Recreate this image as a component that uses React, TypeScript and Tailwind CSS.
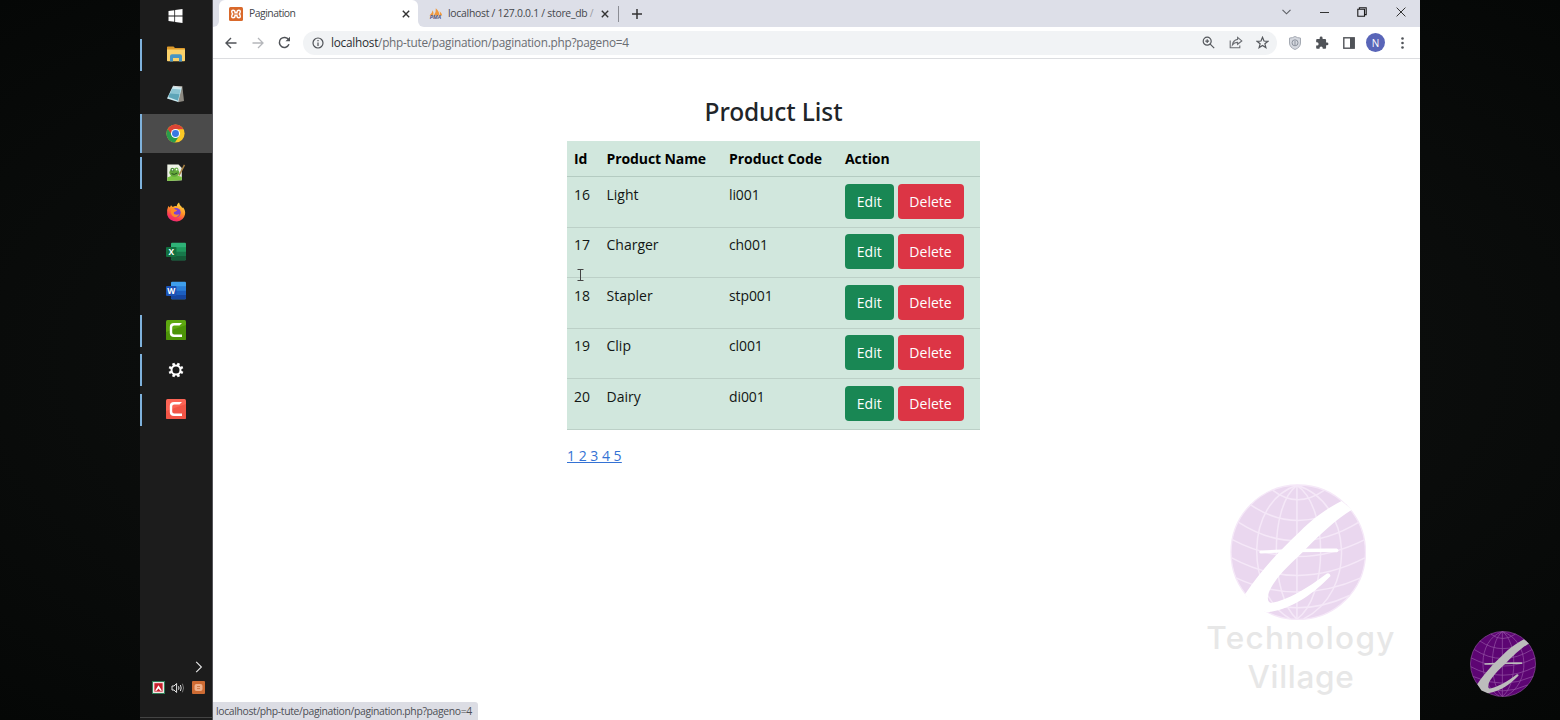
import type { ReactNode } from "react";

const products = [
  { id: 16, name: "Light", code: "li001" },
  { id: 17, name: "Charger", code: "ch001" },
  { id: 18, name: "Stapler", code: "stp001" },
  { id: 19, name: "Clip", code: "cl001" },
  { id: 20, name: "Dairy", code: "di001" },
];

function Globe({ size, fill, line, slash }: { size: number; fill: string; line: string; slash: string }) {
  return (
    <svg width={size} height={size} viewBox="119 43 410 410" className="block shrink-0">
      <circle cx="324" cy="248" r="202" fill={fill} stroke={line} strokeWidth="4" />
      <g fill="none" stroke={line} strokeWidth="4.5">
        <path d="M320 47V449" />
        <path d="M320 47C235 110 240 380 320 449M320 47C415 110 415 380 320 449" />
        <path d="M320 47C160 100 165 370 300 448M320 47C490 100 500 370 340 448" />
        <path d="M248 62Q320 118 402 62M180 105Q320 200 470 106M145 158Q320 270 505 158M126 210Q320 312 524 210M124 265Q320 370 524 265M137 325Q320 410 512 325M170 378Q320 452 478 378" />
      </g>
      <path
        d="M454 94C400 122 365 150 330 185C265 246 215 300 164 374L190 412L230 429C310 417 372 370 421 319Q419 309 410 312C350 358 290 392 245 400C228 402 228 375 248 345C275 303 310 275 340 245C395 188 435 152 485 120Z"
        fill={slash}
      />
      <path d="M211 243Q320 236 440 237Q450 243 440 248Q320 246 211 252Q203 248 211 243Z" fill={slash} />
    </svg>
  );
}

function WindowsIcon() {
  return (
    <svg width="15" height="14" viewBox="0 0 15 14" fill="#fff">
      <path d="M.5 2 6.3 1.2V6.6H.5ZM7.1 1.1 14.5.1V6.6H7.1ZM.5 7.4H6.3V12.8L.5 12ZM7.1 7.4H14.5V13.9L7.1 12.9Z" />
    </svg>
  );
}

function FolderIcon() {
  return (
    <svg width="20" height="16" viewBox="0 0 20 16">
      <path d="M1 1.2Q1 .5 1.8.5H7.5L9 2H18.3Q19 2 19 2.8V6H1Z" fill="#dd9a2b" />
      <path d="M1 3.6H19V14.5Q19 15.3 18.2 15.3H1.8Q1 15.3 1 14.5Z" fill="#fbd26b" />
      <path d="M4 15.5V10.3Q4 8.2 6 8.2H14Q16 8.2 16 10.3V15.5H13V12H7V15.5Z" fill="#4795c4" />
    </svg>
  );
}

function NotepadIcon() {
  return (
    <svg width="20" height="18" viewBox="0 0 20 18">
      <path d="M7 1.2 16.3 1 18 16 12 17.2Z" fill="#8d8a82" />
      <path d="M6.8 1.3 15.8 2.5 12.2 17 1 13.4Z" fill="#cdeaf1" />
      <path d="M6 3.7 14.7 4.6 11.9 15.4 2.5 12.1Z" fill="#8cc4d2" />
      <path d="M3.8 8.6 13.5 9.2 11.9 15.4 2.5 12.1Z" fill="#5da5b8" />
      <path d="M7 1.2 15.8 2.3" stroke="#ddd" strokeWidth="1" />
    </svg>
  );
}

function ChromeIcon() {
  return (
    <svg width="19" height="19" viewBox="0 0 48 48">
      <circle cx="24" cy="24" r="23" fill="#fbc926" />
      <path d="M24 24 4.1 12.5A23 23 0 0 0 22.5 47L34 29Z" fill="#2a9c4c" />
      <path d="M4.1 12.5A23 23 0 0 1 43.9 13H24L15 28Z" fill="#dd4435" />
      <circle cx="24" cy="24" r="11.4" fill="#fff" />
      <circle cx="24" cy="24" r="8.8" fill="#3a78e2" />
    </svg>
  );
}

function NotepadPlusIcon() {
  return (
    <svg width="20" height="19" viewBox="0 0 20 19">
      <path d="M1.3 1.5H12.5L15.8 5V17.2L1.3 18Z" fill="#eef3e6" />
      <path d="M1.3 14.5Q8 11 15.8 14V17.2L1.3 18Z" fill="#7cc443" />
      <ellipse cx="8.3" cy="9.6" rx="5" ry="4.2" fill="#64a83a" />
      <circle cx="6.3" cy="6.7" r="1.9" fill="#4b8b3c" />
      <circle cx="10.5" cy="6.5" r="1.9" fill="#6fb44c" />
      <circle cx="6.5" cy="6.8" r=".8" fill="#fff" />
      <circle cx="10.6" cy="6.6" r=".8" fill="#fff" />
      <path d="M5.5 10.6Q8 12.5 11.3 10" stroke="#294f20" strokeWidth="1" fill="none" />
      <path d="M13 12.5 18.5 1.8" stroke="#a98243" strokeWidth="1.5" />
    </svg>
  );
}

function FirefoxIcon() {
  return (
    <svg width="20" height="20" viewBox="0 0 20 20">
      <defs>
        <linearGradient id="fox" x1=".8" y1="0" x2=".3" y2="1">
          <stop offset="0" stopColor="#ffe34a" />
          <stop offset=".45" stopColor="#ff9326" />
          <stop offset=".8" stopColor="#fc3a55" />
          <stop offset="1" stopColor="#e8257e" />
        </linearGradient>
      </defs>
      <path d="M2.3 4 3.8 5.4 5 3.2 6.8 5Q8.4 3.8 10.6 4.2Q11.2 1.8 13 .5Q13.4 3 15.4 4.6L16.2 6L17 5.3Q19.8 8.5 19 12.4Q17.6 18.6 11 19.4Q3.3 19.5 1.2 13Q.3 8.2 2.3 4Z" fill="url(#fox)" />
      <circle cx="10" cy="10.6" r="4.7" fill="#7b42d6" />
      <path d="M4.8 6.2Q8 5.6 9.2 7.5L11.3 8Q10.4 9.8 8.2 9.9Q7 12 9.8 12.6Q12 13 13.5 11.8Q12 15.6 8.3 15.1Q4 13.7 4.8 6.2Z" fill="#ff8a25" />
    </svg>
  );
}

function OfficeIcon({ letter, tones }: { letter: string; tones: string[] }) {
  return (
    <svg width="20" height="19" viewBox="0 0 20 19">
      <rect x="5" y=".7" width="15" height="17.6" rx="1" fill={tones[0]} />
      <path d="M5 5.2H20V9.5H5Z" fill={tones[1]} />
      <path d="M5 9.5H20V14H5Z" fill={tones[2]} />
      <path d="M5 14H20V17.3Q20 18.3 19 18.3H6Q5 18.3 5 17.3Z" fill={tones[3]} />
      <rect x="0" y="4.9" width="10.5" height="10" rx="1" fill={tones[4]} />
      <text x="5.2" y="12.8" textAnchor="middle" fontSize="8.3" fontWeight="700" fill="#fff" fontFamily="Open Sans, sans-serif">
        {letter}
      </text>
    </svg>
  );
}

function CamtasiaIcon({ fill, shade }: { fill: string; shade: string }) {
  return (
    <svg width="20" height="20" viewBox="0 0 20 20">
      <rect width="20" height="20" rx="1.5" fill={fill} />
      <path d="M0 12 20 5V18.5Q20 20 18.5 20H1.5Q0 20 0 18.5Z" fill={shade} />
      <path d="M16 3H8Q3.800 3 3.800 7V13Q3.800 17 8 17H16V14.600H8.200Q6.200 14.600 6.200 12.600V7.400Q6.200 5.400 8.200 5.400H13.500Z" fill="#fff" />
    </svg>
  );
}

function GearIcon() {
  const teeth = [0, 45, 90, 135, 180, 225, 270, 315];
  return (
    <svg width="16" height="16" viewBox="0 0 16 16">
      {teeth.map((a) => (
        <rect key={a} x="6.7" y=".6" width="2.6" height="3.2" fill="#fff" transform={`rotate(${a + 22.5} 8 8)`} />
      ))}
      <circle cx="8" cy="8" r="4.5" fill="none" stroke="#fff" strokeWidth="2" />
    </svg>
  );
}

function TaskItem({ running, active, children }: { running?: boolean; active?: boolean; children: ReactNode }) {
  return (
    <div className={`flex h-[39.43px] items-center ${active ? "bg-[#4b4b4b]" : ""}`}>
      <div className={`w-0.5 ${active ? "h-full" : "h-8"} ${running ? "bg-[#7fb2dc]" : ""}`} />
      <div className="flex flex-1 justify-center pr-[3px] pb-px">{children}</div>
    </div>
  );
}

function Taskbar() {
  return (
    <aside className="flex w-[73px] shrink-0 flex-col border-r border-[#55555a] bg-[#1c1c1c]">
      <div className="flex h-[35px] items-center justify-center pr-px pb-[3px]">
        <WindowsIcon />
      </div>
      <TaskItem running><FolderIcon /></TaskItem>
      <TaskItem><NotepadIcon /></TaskItem>
      <TaskItem running active><ChromeIcon /></TaskItem>
      <TaskItem running><NotepadPlusIcon /></TaskItem>
      <TaskItem><FirefoxIcon /></TaskItem>
      <TaskItem><OfficeIcon letter="X" tones={["#2fb277", "#1f9a5e", "#17784a", "#145c38", "#12703f"]} /></TaskItem>
      <TaskItem><OfficeIcon letter="W" tones={["#3f9fec", "#2b7fd8", "#1c5fc0", "#1646a0", "#1b52b5"]} /></TaskItem>
      <TaskItem running><CamtasiaIcon fill="#5da810" shade="#4c9408" /></TaskItem>
      <TaskItem running><GearIcon /></TaskItem>
      <TaskItem running><CamtasiaIcon fill="#fb6455" shade="#f25546" /></TaskItem>
      <div className="mt-auto flex justify-end pr-[9px]">
        <svg width="8" height="12" viewBox="0 0 8 12" fill="none" stroke="#e8e8e8" strokeWidth="1.1">
          <path d="M1.2.8 6.4 6 1.2 11.2" />
        </svg>
      </div>
      <div className="mt-2 flex h-[14px] items-center pl-3">
        <svg width="13" height="13" viewBox="0 0 13 13">
          <rect width="13" height="13" fill="#2f7f58" />
          <rect x="1" y="1" width="11" height="11" fill="#f1e6e6" />
          <rect x="2.4" y="2.2" width="8.2" height="8.4" fill="#c9202c" />
          <path d="M3 9.8 6.5 4.3 10 9.8 8.3 9.8 6.5 7.4 4.7 9.8Z" fill="#fff" />
        </svg>
        <svg width="14" height="12" viewBox="0 0 14 12" className="ml-[6px]" fill="none" stroke="#e5e5e5" strokeWidth="1">
          <path d="M1 4H3L5.6 1.5V10.5L3 8H1Z" />
          <path d="M7.5 4.3Q8.5 6 7.5 7.7M9.4 3Q11 6 9.4 9" />
          <path d="M11.4 1.7Q13.8 6 11.4 10.3" stroke="#777" />
        </svg>
        <svg width="13" height="13" viewBox="0 0 13 13" className="ml-[7px]">
          <rect width="13" height="13" rx="1" fill="#cd6b33" />
          <rect x="2.5" y="3" width="8" height="7" rx="2" fill="#eeb08a" />
          <path d="M5 5.5H8M5 7.6H8" stroke="#cd7a48" strokeWidth="1" />
        </svg>
      </div>
      <div className="mt-[22.5px] mb-[2px] h-px w-full bg-[#444]" />
    </aside>
  );
}

function CloseX() {
  return (
    <svg width="8" height="8" viewBox="0 0 8 8" stroke="#333" strokeWidth="1.4" className="shrink-0">
      <path d="M.8.8 7.2 7.2M7.2.8.8 7.2" />
    </svg>
  );
}

function TabStrip() {
  return (
    <div className="flex h-[27px] shrink-0 items-start bg-[#dddfe8]">
      <div className="h-[27px] w-1.5 shrink-0 bg-white">
        <div className="h-full w-full rounded-br-[6px] bg-[#dddfe8]" />
      </div>
      <div className="flex h-[27px] w-[199px] items-center rounded-t-[6px] bg-white pr-2 pl-[10px]">
        <svg width="14" height="14" viewBox="0 0 14 14" className="shrink-0">
          <rect width="14" height="14" rx="1.5" fill="#d9692b" />
          <path d="M4 3.2Q6 3.2 6 5V5.8H8V5Q8 3.2 10 3.2 11.3 3.2 11.3 4.6 11.3 6 10.3 7 11.3 8 11.3 9.4 11.3 10.8 10 10.8 8 10.8 8 9V8.2H6V9Q6 10.8 4 10.8 2.7 10.8 2.7 9.4 2.7 8 3.7 7 2.7 6 2.7 4.6 2.7 3.2 4 3.2Z" fill="none" stroke="#fff" strokeWidth="1.4" />
        </svg>
        <span className="ml-1.5 flex-1 text-[10.4px] tracking-[-0.5px] text-[#45474c]">Pagination</span>
        <CloseX />
      </div>
      <div className="h-[27px] w-1.5 shrink-0 bg-white">
        <div className="h-full w-full rounded-bl-[6px] bg-[#dddfe8]" />
      </div>
      <div className="flex h-[27px] w-[195px] items-center">
        <svg width="15" height="14" viewBox="0 0 15 14" className="ml-1 shrink-0">
          <path d="M1.5 8.5Q4 6.5 4.700 3.200Q6 6 5.200 8.500ZM5.800 8.500Q8.300 5 7.800 1.300Q11.700 5 11.500 8.500ZM12 8.500Q12.400 6.500 11.600 4.300Q13.800 6 14.200 8.500Z" fill="#f0983d" />
          <text x="7.5" y="12.2" textAnchor="middle" fontSize="5.400" fontWeight="700" fontStyle="italic" fill="#56557e" fontFamily="Open Sans, sans-serif">PMA</text>
        </svg>
        <span className="ml-[5px] w-[153px] text-[10.4px] tracking-[-0.27px] whitespace-nowrap text-[#45474c]">
          localhost / 127.0.0.1 / store_db <span className="text-[#9a9ca3]">/</span>
        </span>
        <CloseX />
        <div className="ml-[9px] h-4 w-px bg-[#8b8d94]" />
      </div>
      <svg width="10" height="10" viewBox="0 0 10 10" stroke="#333" strokeWidth="1.5" className="mt-[9px] ml-[13px]">
        <path d="M5 0V10M0 5H10" />
      </svg>
      <div className="mr-[14px] ml-auto flex h-[24px] items-center">
        <svg width="9" height="6" viewBox="0 0 9 6" fill="none" stroke="#5c5e64" strokeWidth="1.1" className="mr-[29px]">
          <path d="M.5.8 4.5 4.8 8.5.8" />
        </svg>
        <div className="mr-[28px] h-px w-[9px] bg-[#333]" />
        <svg width="10" height="10" viewBox="0 0 10 10" fill="none" stroke="#1a1a1a" strokeWidth="1.1" className="mr-[29px]">
          <path d="M.8 2.2H7.5V9.2H.8ZM2.4 2V.8H9.2V7.6H7.7" />
        </svg>
        <svg width="10" height="10" viewBox="0 0 10 10" stroke="#333" strokeWidth="1">
          <path d="M.6.6 9.4 9.4M9.4.6.6 9.4" />
        </svg>
      </div>
    </div>
  );
}

function Toolbar() {
  return (
    <div className="flex h-8 shrink-0 items-center border-b border-[#dcdde0] bg-white pl-[12px]">
      <svg width="12" height="12" viewBox="0 0 12 12" fill="none" stroke="#505358" strokeWidth="1.4">
        <path d="M11.5 6H1.2M6 1 1 6 6 11" />
      </svg>
      <svg width="12" height="12" viewBox="0 0 12 12" fill="none" stroke="#b5b7bb" strokeWidth="1.3" className="ml-[15px]">
        <path d="M.5 6H10.8M6 1 11 6 6 11" />
      </svg>
      <svg width="13" height="13" viewBox="0 0 13 13" fill="none" stroke="#505358" strokeWidth="1.5" className="ml-[14px]">
        <path d="M11 8.3A5 5 0 1 1 10.6 3.7" />
        <path d="M12 .7V5.2H7.5Z" fill="#505358" stroke="none" />
      </svg>
      <div className="ml-3 flex h-6 w-[974px] items-center rounded-full bg-[#f1f3f5] pr-2 pl-[9px]">
        <svg width="12" height="12" viewBox="0 0 12 12" fill="none" stroke="#505358" strokeWidth="1.2">
          <circle cx="6" cy="6" r="5" />
          <path d="M6 5.4V9M6 3V4.3" />
        </svg>
        <span className="ml-[7px] flex-1 pt-px text-[11.8px] tracking-[-0.26px] whitespace-nowrap text-[#6a6d72]">
          <span className="text-[#2b2d31]">localhost</span>/php-tute/pagination/pagination.php?pageno=4
        </span>
        <svg width="13" height="13" viewBox="0 0 13 13" fill="none" stroke="#55585d" strokeWidth="1.2">
          <circle cx="5.2" cy="5.2" r="4" />
          <path d="M8.2 8.2 12.2 12.2M5.2 3.3V7.1M3.3 5.2H7.1" />
        </svg>
        <svg width="14" height="13" viewBox="0 0 14 13" fill="none" stroke="#6a6d72" strokeWidth="1.1" className="ml-[14px]">
          <path d="M1.2 4.5V11.8H10.8V9.5" />
          <path d="M8.6 1.4 12.8 4.9 8.6 8.3V6.4Q5.5 6.2 3.4 9 4 4.2 8.6 3.4Z" />
        </svg>
        <svg width="13" height="13" viewBox="0 0 13 13" fill="none" stroke="#55585d" strokeWidth="1.2" className="ml-[13px]">
          <path d="M6.5 1.3 8 5 11.9 5.3 8.9 7.8 9.9 11.6 6.5 9.5 3.1 11.6 4.1 7.8 1.1 5.3 5 5Z" />
        </svg>
      </div>
      <svg width="12" height="14" viewBox="0 0 12 14" className="ml-3">
        <path d="M6 .5Q8.5 2 11.5 2.1V7Q11.3 11.5 6 13.5.7 11.5.5 7V2.1Q3.5 2 6 .5Z" fill="#d5d8df" stroke="#a4a9b2" />
        <circle cx="6" cy="6.8" r="3" fill="none" stroke="#8d939e" />
        <path d="M6 4.8V9" stroke="#8d939e" />
      </svg>
      <svg width="14" height="14" viewBox="0 0 24 24" fill="#505358" className="ml-[14px]">
        <path d="M20.5 11H19V7c0-1.1-.9-2-2-2h-4V3.5a2.5 2.5 0 0 0-5 0V5H4c-1.100 0-2 .9-2 2v3.800h1.500a2.700 2.700 0 0 1 0 5.400H2V20c0 1.100.9 2 2 2h3.800v-1.500a2.700 2.700 0 0 1 5.400 0V22H17c1.100 0 2-.9 2-2v-4h1.500a2.500 2.500 0 0 0 0-5z" />
      </svg>
      <svg width="12" height="12" viewBox="0 0 12 12" className="ml-[14px]">
        <rect x=".8" y=".8" width="10.4" height="10.4" fill="none" stroke="#505358" strokeWidth="1.4" />
        <rect x="7" y="1" width="4.400" height="10" fill="#505358" />
      </svg>
      <div className="ml-[11px] flex size-[19px] items-center justify-center rounded-full bg-[#5965b8] text-[10px] leading-none text-white">N</div>
      <svg width="3" height="12" viewBox="0 0 3 12" fill="#505358" className="ml-[15.5px]">
        <circle cx="1.500" cy="1.500" r="1.300" />
        <circle cx="1.500" cy="6" r="1.300" />
        <circle cx="1.500" cy="10.500" r="1.300" />
      </svg>
    </div>
  );
}

function ProductTable() {
  return (
    <table className="w-[413px] table-fixed border-collapse bg-[#d1e7dd] text-[14px]">
      <colgroup>
        <col className="w-8" />
        <col className="w-[122.500px]" />
        <col className="w-[116px]" />
        <col />
      </colgroup>
      <thead>
        <tr className="h-[35.5px] border-b border-[#b4cbc1] text-left font-bold text-black">
          <th className="p-0 pl-[7px] tracking-[-0.1px]">Id</th>
          <th className="p-0 pl-[7.500px] tracking-[-0.1px]">Product Name</th>
          <th className="p-0 pl-[7.500px] tracking-[-0.050px]">Product Code</th>
          <th className="p-0 pl-[7.500px] tracking-[-0.1px]">Action</th>
        </tr>
      </thead>
      <tbody>
        {products.map((p) => (
          <tr key={p.id} className="h-[50.500px] border-b border-[#bcd0c7] align-top leading-[22px] text-[#121614]">
            <td className="p-0 pt-[6.5px] pl-[7px]">{p.id}</td>
            <td className="p-0 pt-[6.5px] pl-[7.500px]">{p.name}</td>
            <td className="p-0 pt-[6.5px] pl-[7.500px] tracking-[-0.1px]">{p.code}</td>
            <td className="p-0 pt-[6.5px] pl-[7.500px]">
              <div className="flex gap-1 text-white">
                <button className="h-[35px] w-[48.500px] rounded-[4px] bg-[#198754] pt-px">Edit</button>
                <button className="h-[35px] w-[66px] rounded-[4px] bg-[#dc3545] pt-px">Delete</button>
              </div>
            </td>
          </tr>
        ))}
      </tbody>
    </table>
  );
}

export default function App() {
  return (
    <div className="relative flex h-[720px] w-[1560px] overflow-hidden bg-[radial-gradient(ellipse_at_center,#111312_0%,#0c0e0d_50%,#050706_100%)] pl-[140px] font-['Open_Sans',sans-serif]">
      <Taskbar />
      <main className="relative flex w-[1207px] shrink-0 flex-col bg-white">
        <TabStrip />
        <Toolbar />
        <section className="ml-[354px] w-[413px]">
          <h1 className="mt-[36px] mb-[13px] text-center font-['Noto_Sans','Open_Sans',sans-serif] text-[24.500px] leading-[33px] font-medium tracking-[-0.1px] text-[#212529]">Product List</h1>
          <ProductTable />
          <div className="mt-[15.500px] flex text-[14px] leading-[22px] text-[#3472d4] underline">
            <a className="whitespace-pre">1 2 3 4 5</a>
          </div>
        </section>
        <svg width="7" height="12" viewBox="0 0 7 12" className="absolute top-[269px] left-[364px]" fill="none" stroke="#444" strokeWidth="1">
          <path d="M.5.5H6.500M.5 11.500H6.500M3.500.5V11.500" />
        </svg>
        <div className="absolute right-[24px] bottom-[24px] flex w-[190px] flex-col items-center text-[31.500px] leading-[38.500px] font-medium text-[#e7e7e7] font-['Inter',sans-serif]">
          <div className="mr-[6px] mb-[-1px]">
            <Globe size={136.500} fill="#ead7ef" line="#f5e8f8" slash="#ffffff" />
          </div>
          <span className="tracking-[1.300px] whitespace-nowrap">Technology</span>
          <span className="tracking-[0.700px] whitespace-nowrap">Village</span>
        </div>
        <div className="absolute bottom-0 left-0 flex h-[18px] w-[265px] items-center rounded-tr-[3px] bg-[#dcdde4] pt-0.5 pl-[3px] text-[10.400px] tracking-[-0.350px] whitespace-nowrap text-[#4d4f55]">
          localhost/php-tute/pagination/pagination.php?pageno=4
        </div>
      </main>
      <div className="absolute right-[24px] bottom-[23.500px]">
        <Globe size={66} fill="#5d0573" line="#9150a2" slash="#bcbcbc" />
      </div>
    </div>
  );
}
